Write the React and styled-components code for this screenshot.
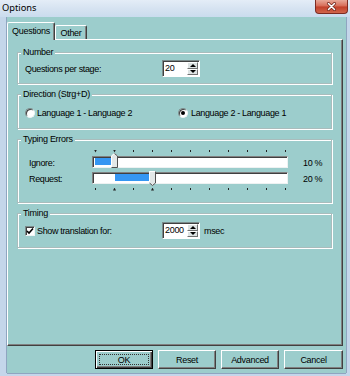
import React from "react";
import styled, { createGlobalStyle, css } from "styled-components";

const TEAL = "#9ccdcc";
const TICK_START = 3;
const TICK_STEP = 19.1;

const GlobalStyle = createGlobalStyle`
  html, body {
    margin: 0;
    padding: 0;
    background: #c4d6ea;
  }
  body {
    font-family: "Liberation Sans", Arial, sans-serif;
  }
`;

const Window = styled.div`
  position: relative;
  width: 350px;
  height: 376px;
  display: flex;
  flex-direction: column;
  overflow: hidden;
  background: #c4d6ea;
`;

const TitleBar = styled.div`
  flex: none;
  height: 17px;
  display: flex;
  align-items: flex-start;
  justify-content: space-between;
  background: linear-gradient(180deg, #e4edf7 0%, #d6e3f1 50%, #cadcee 100%);
`;

const Title = styled.span`
  padding-left: 2px;
  font-family: "Noto Sans", sans-serif;
  font-size: 9.3px;
  line-height: 15px;
  color: #000;
`;

const CloseButton = styled.div`
  width: 33px;
  height: 14px;
  margin-right: 2px;
  box-sizing: border-box;
  display: flex;
  align-items: center;
  justify-content: center;
  border: 1px solid #7d2b22;
  border-top: none;
  border-radius: 0 0 4px 4px;
  background: linear-gradient(180deg, #e8a898 0%, #d66a55 48%, #c23f29 52%, #d0664c 100%);
`;

const Frame = styled.div`
  flex: 1;
  min-height: 0;
  display: flex;
  padding: 0 4px 3px 7px;
`;

const Client = styled.div`
  flex: 1;
  display: flex;
  flex-direction: column;
  padding: 5px 3px 4px 0;
  background: ${TEAL};
  box-shadow: -1px 0 0 #8fa5c0, 1px 0 0 #8fa5c0, 0 1px 0 #8fa5c0;
`;

const TabStrip = styled.div`
  height: 17px;
  display: flex;
  align-items: flex-end;
  position: relative;
  z-index: 1;
`;

const Tab = styled.div`
  box-sizing: border-box;
  width: ${(p) => p.$width}px;
  height: ${(p) => (p.$active ? 18 : 14)}px;
  margin-bottom: ${(p) => (p.$active ? -1 : 0)}px;
  display: flex;
  justify-content: center;
  padding-top: ${(p) => (p.$active ? 2 : 1)}px;
  background: ${TEAL};
  border-left: 1px solid #fff;
  border-top: 1px solid #fff;
  border-right: 1px solid #404040;
  border-radius: 2px 2px 0 0;
  box-shadow: inset -1px 0 0 #808080;
  font-size: 9px;
  letter-spacing: -0.3px;
  line-height: 12px;
  color: #000;
`;

const Panel = styled.div`
  flex: 1;
  display: flex;
  flex-direction: column;
  gap: 10px;
  padding: 12px 10px 0 9px;
  border-left: 1px solid #fff;
  border-top: 1px solid #fff;
  border-right: 1px solid #404040;
  border-bottom: 1px solid #404040;
  box-shadow: inset -1px -1px 0 #808080;
`;

const GroupBox = styled.div`
  display: flex;
  flex-direction: column;
  padding: 0 7px ${(p) => p.$pb}px 7px;
  border: 1px solid #a9bcbc;
  box-shadow: inset 1px 1px 0 #fff, 1px 1px 0 #fff;
`;

const Legend = styled.div`
  position: relative;
  align-self: flex-start;
  margin: -7px 0 0 -4px;
  padding: 0 2px;
  background: ${TEAL};
  font-size: 9px;
  letter-spacing: -0.3px;
  line-height: 13px;
  color: #000;
`;

const Row = styled.div`
  display: flex;
  align-items: center;
  height: ${(p) => p.$h}px;
  margin-top: ${(p) => p.$mt}px;
  font-size: 9px;
  letter-spacing: -0.35px;
  color: #000;
`;

const Field = styled.div`
  display: flex;
  align-items: center;
  gap: ${(p) => p.$gap || 0}px;
  width: ${(p) => (p.$width ? `${p.$width}px` : "auto")};
  margin-left: ${(p) => p.$ml || 0}px;
  flex: none;
`;

const Radio = styled.span`
  width: 10px;
  height: 10px;
  box-sizing: border-box;
  border-radius: 50%;
  background: #fff;
  border: 1px solid;
  border-color: #7b8b8b #eef4f4 #eef4f4 #7b8b8b;
  box-shadow: inset 1px 1px 0 #404040;
  display: flex;
  align-items: center;
  justify-content: center;
  &::after {
    content: "";
    display: ${(p) => (p.$checked ? "block" : "none")};
    width: 4px;
    height: 4px;
    border-radius: 50%;
    background: #000;
  }
`;

const CheckBox = styled.span`
  width: 10px;
  height: 10px;
  box-sizing: border-box;
  background: #fff;
  border: 1px solid;
  border-color: #7b8b8b #eef4f4 #eef4f4 #7b8b8b;
  box-shadow: inset 1px 1px 0 #404040;
  display: flex;
  align-items: center;
  justify-content: center;
`;

const Spinner = styled.div`
  width: 38px;
  height: 17px;
  box-sizing: border-box;
  display: flex;
  background: #fff;
  border: 1px solid;
  border-color: #7b8b8b #fff #fff #7b8b8b;
  box-shadow: inset 1px 1px 0 #404040;
`;

const SpinValue = styled.span`
  flex: 1;
  padding-left: 2px;
  font-size: 9px;
  letter-spacing: -0.3px;
  line-height: 15px;
  color: #000;
`;

const SpinButtons = styled.div`
  width: 11px;
  display: flex;
  flex-direction: column;
  margin: 1px 1px 1px 0;
`;

const SpinArrow = styled.div`
  flex: 1;
  box-sizing: border-box;
  display: flex;
  align-items: center;
  justify-content: center;
  background: #dde3e3;
  border: 1px solid;
  border-color: #fff #707070 #707070 #fff;
  &::after {
    content: "";
    width: 0;
    height: 0;
    border-left: 3px solid transparent;
    border-right: 3px solid transparent;
    ${(p) =>
      p.$down
        ? css`border-top: 3px solid #000;`
        : css`border-bottom: 3px solid #000;`}
  }
`;

const SliderGrid = styled.div`
  display: grid;
  grid-template-columns: 63px 196px auto;
  grid-template-rows: 2px 12px 12px 2px;
  row-gap: 4px;
  align-items: center;
  margin: 4px 0 0 4px;
  font-size: 9px;
  letter-spacing: -0.35px;
  color: #000;
`;

const TickRow = styled.div`
  grid-column: 2;
  height: 3px;
  display: flex;
  justify-content: space-between;
  align-items: ${(p) => (p.$bottom ? "flex-start" : "flex-end")};
  padding: 0 1px 0 2px;
`;

const Tick = styled.span`
  width: 3px;
  height: 3px;
  display: flex;
  justify-content: center;
  &::after {
    content: "";
    width: ${(p) => (p.$mark ? 3 : 1)}px;
    height: ${(p) => (p.$mark ? 3 : 2)}px;
    background: #222;
    ${(p) =>
      p.$mark &&
      css`
        clip-path: ${p.$bottom
          ? "polygon(50% 0, 100% 100%, 0 100%)"
          : "polygon(0 0, 100% 0, 50% 100%)"};
      `}
  }
`;

const SliderLabel = styled.span`
  grid-column: 1;
  line-height: 12px;
  padding-top: 2px;
`;

const Track = styled.div`
  grid-column: 2;
  position: relative;
  height: 12px;
  box-sizing: border-box;
  background: #fff;
  border: 1px solid;
  border-color: #808080 #eef2f2 #eef2f2 #808080;
  box-shadow: inset 1px 1px 0 #404040;
`;

const Selection = styled.span`
  position: absolute;
  top: 1px;
  bottom: 2px;
  background: #3596f2;
`;

const ThumbIcon = styled.svg`
  position: absolute;
  top: ${(p) => (p.$down ? -2 : -4)}px;
`;

const SliderValue = styled.span`
  grid-column: 3;
  padding-left: 15px;
  padding-top: 2px;
  line-height: 12px;
`;

const ButtonRow = styled.div`
  display: flex;
  justify-content: flex-end;
  gap: 5px;
  margin-top: 4px;
`;

const Button = styled.button`
  position: relative;
  width: ${(p) => p.$width || 58}px;
  height: 19px;
  box-sizing: border-box;
  padding: 0;
  background: ${TEAL};
  font-family: "Liberation Sans", Arial, sans-serif;
  font-size: 9px;
  letter-spacing: -0.3px;
  color: #000;
  border: 1px solid;
  border-color: #fff #404040 #404040 #fff;
  box-shadow: inset -1px -1px 0 #808080;
  ${(p) =>
    p.$default &&
    css`
      border-color: #000;
      box-shadow: inset 1px 1px 0 #fff, inset -1px -1px 0 #404040,
        inset -2px -2px 0 #808080;
      &::after {
        content: "";
        position: absolute;
        inset: 3px;
        border: 1px dotted #333;
      }
    `}
`;

const tickX = (i) => TICK_START + i * TICK_STEP;

function Thumb({ at, down }) {
  const left = tickX(at) - 3.5 - 1;
  return (
    <ThumbIcon
      $down={down}
      width="7"
      height="15"
      viewBox="0 0 7 15"
      style={{ left }}
    >
      {down ? (
        <>
          <polygon points="0,0 7,0 7,12 3.5,15 0,12" fill="#e3e8e8" />
          <polyline points="0.5,12 0.5,0.5 6.5,0.5" fill="none" stroke="#fff" />
          <polyline
            points="6.5,0.5 6.5,12 3.5,14.5 0.5,12"
            fill="none"
            stroke="#505050"
          />
        </>
      ) : (
        <>
          <polygon points="0,3 3.5,0 7,3 7,15 0,15" fill="#e3e8e8" />
          <polyline points="0.5,14.5 0.5,3 3.5,0.5" fill="none" stroke="#fff" />
          <polyline
            points="3.5,0.5 6.5,3 6.5,14.5 0.5,14.5"
            fill="none"
            stroke="#505050"
          />
        </>
      )}
    </ThumbIcon>
  );
}

function Ticks({ marks, bottom }) {
  return (
    <TickRow $bottom={bottom}>
      {Array.from({ length: 11 }).map((_, i) => (
        <Tick key={i} $mark={marks.includes(i)} $bottom={bottom} />
      ))}
    </TickRow>
  );
}

function Slider({ from, to, down }) {
  const start = tickX(from) + (from > 0 ? 1 : 0) - 1;
  const end = tickX(to) - 3.5 - 1;
  return (
    <Track>
      <Selection style={{ left: start, width: end - start }} />
      <Thumb at={to} down={down} />
    </Track>
  );
}

function SpinBox({ value }) {
  return (
    <Spinner>
      <SpinValue>{value}</SpinValue>
      <SpinButtons>
        <SpinArrow />
        <SpinArrow $down />
      </SpinButtons>
    </Spinner>
  );
}

export default function App() {
  return (
    <Window>
      <GlobalStyle />
      <TitleBar>
        <Title>Options</Title>
        <CloseButton>
          <svg width="11" height="9" viewBox="0 0 11 9">
            <path
              d="M2.5 1.5 L8.5 7.5 M8.5 1.5 L2.5 7.5"
              stroke="#6b2118"
              strokeWidth="3"
              strokeLinecap="round"
            />
            <path
              d="M2.5 1.5 L8.5 7.5 M8.5 1.5 L2.5 7.5"
              stroke="#fff"
              strokeWidth="1.6"
              strokeLinecap="round"
            />
          </svg>
        </CloseButton>
      </TitleBar>
      <Frame>
        <Client>
          <TabStrip>
            <Tab $active $width={48}>
              Questions
            </Tab>
            <Tab $width={32}>Other</Tab>
          </TabStrip>
          <Panel>
            <GroupBox $pb={6}>
              <Legend>Number</Legend>
              <Row $h={17} $mt={1}>
                <Field $width={137}>Questions per stage:</Field>
                <SpinBox value="20" />
              </Row>
            </GroupBox>

            <GroupBox $pb={8}>
              <Legend>Direction (Strg+D)</Legend>
              <Row $h={14} $mt={5}>
                <Field $width={153} $gap={2}>
                  <Radio />
                  Language 1 - Language 2
                </Field>
                <Field $gap={3}>
                  <Radio $checked />
                  Language 2 - Language 1
                </Field>
              </Row>
            </GroupBox>

            <GroupBox $pb={12}>
              <Legend>Typing Errors</Legend>
              <SliderGrid>
                <Ticks marks={[0, 1]} />
                <SliderLabel>Ignore:</SliderLabel>
                <Slider from={0} to={1} />
                <SliderValue>10 %</SliderValue>
                <SliderLabel>Request:</SliderLabel>
                <Slider from={1} to={3} down />
                <SliderValue>20 %</SliderValue>
                <Ticks marks={[1, 3]} bottom />
              </SliderGrid>
            </GroupBox>

            <GroupBox $pb={8}>
              <Legend>Timing</Legend>
              <Row $h={17} $mt={2}>
                <Field $width={137} $gap={2}>
                  <CheckBox>
                    <svg width="8" height="8" viewBox="0 0 8 8">
                      <path
                        d="M1 4 L3 6 L7 1.5"
                        fill="none"
                        stroke="#000"
                        strokeWidth="1.6"
                      />
                    </svg>
                  </CheckBox>
                  Show translation for:
                </Field>
                <SpinBox value="2000" />
                <Field $ml={4}>msec</Field>
              </Row>
            </GroupBox>
          </Panel>
          <ButtonRow>
            <Button $default>OK</Button>
            <Button>Reset</Button>
            <Button>Advanced</Button>
            <Button $width={59}>Cancel</Button>
          </ButtonRow>
        </Client>
      </Frame>
    </Window>
  );
}
